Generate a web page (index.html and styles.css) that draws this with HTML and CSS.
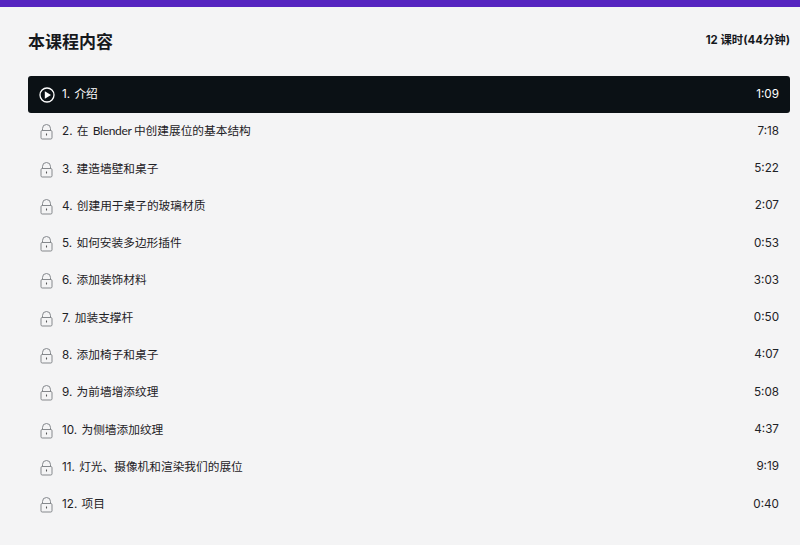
FILE: index.html
```html
<!DOCTYPE html>
<html lang="zh">
<head>
<meta charset="utf-8">
<title>本课程内容</title>
<link rel="stylesheet" href="styles.css">
</head>
<body>
<svg class="defs" width="0" height="0" aria-hidden="true">
  <symbol id="lock" viewBox="0 0 13 16">
    <path d="M2.5 7V4.5a4 4 0 0 1 8 0V7" fill="none" stroke="currentColor" stroke-width="1"/>
    <rect x="1" y="6.5" width="11" height="8.5" rx="1.2" fill="none" stroke="currentColor" stroke-width="1"/>
    <path d="M6.5 9.5v2" stroke="#555" stroke-width="1.1"/>
  </symbol>
</svg>
<div class="topbar"></div>
<main class="content">
  <header class="head">
    <h1 class="title">本课程内容</h1>
    <div class="summary">12 课时(44分钟)</div>
  </header>
  <ol class="list">
    <li class="row active">
      <svg class="play" viewBox="0 0 16 16" aria-hidden="true"><circle cx="8" cy="8" r="7" fill="none" stroke="currentColor" stroke-width="1.3"/><path d="M5.8 4.2v7.6L12 8z" fill="currentColor"/></svg>
      <span class="name">1. 介绍</span><span class="time">1:09</span>
    </li>
    <li class="row"><svg class="lock"><use href="#lock"/></svg><span class="name">2. 在 <span class="latin">Blender</span> 中创建展位的基本结构</span><span class="time">7:18</span></li>
    <li class="row"><svg class="lock"><use href="#lock"/></svg><span class="name">3. 建造墙壁和桌子</span><span class="time">5:22</span></li>
    <li class="row"><svg class="lock"><use href="#lock"/></svg><span class="name">4. 创建用于桌子的玻璃材质</span><span class="time">2:07</span></li>
    <li class="row"><svg class="lock"><use href="#lock"/></svg><span class="name">5. 如何安装多边形插件</span><span class="time">0:53</span></li>
    <li class="row"><svg class="lock"><use href="#lock"/></svg><span class="name">6. 添加装饰材料</span><span class="time">3:03</span></li>
    <li class="row"><svg class="lock"><use href="#lock"/></svg><span class="name">7. 加装支撑杆</span><span class="time">0:50</span></li>
    <li class="row"><svg class="lock"><use href="#lock"/></svg><span class="name">8. 添加椅子和桌子</span><span class="time">4:07</span></li>
    <li class="row"><svg class="lock"><use href="#lock"/></svg><span class="name">9. 为前墙增添纹理</span><span class="time">5:08</span></li>
    <li class="row"><svg class="lock"><use href="#lock"/></svg><span class="name">10. 为侧墙添加纹理</span><span class="time">4:37</span></li>
    <li class="row"><svg class="lock"><use href="#lock"/></svg><span class="name">11. 灯光、摄像机和渲染我们的展位</span><span class="time">9:19</span></li>
    <li class="row"><svg class="lock"><use href="#lock"/></svg><span class="name">12. 项目</span><span class="time">0:40</span></li>
  </ol>
</main>
</body>
</html>
```
FILE: styles.css
```css
* { box-sizing: border-box; }
html, body { margin: 0; height: 100%; }
body {
  background: #f4f4f5;
  color: #14181c;
  font-family: Inter, "Noto Sans CJK SC", sans-serif;
  overflow: hidden;
}
.defs { position: absolute; }
.topbar { height: 7px; background: #5624c0; }
.content { padding: 0 10px 0 28px; }
.head {
  display: flex;
  justify-content: space-between;
  align-items: flex-start;
  height: 69px;
  padding-top: 23px;
}
.title { margin: 0; font-size: 17px; line-height: 24px; font-weight: 700; color: #16191d; }
.summary { font-size: 11.4px; line-height: 18px; font-weight: 700; padding-top: 1px; color: #16191d; }
.list { list-style: none; margin: 0; padding: 0; }
.row {
  display: flex;
  align-items: center;
  height: 37.27px;
  padding: 0 11px;
  font-size: 11.7px;
  color: #1e2226;
  border-radius: 3px;
}
.row.active { background: #0b1115; color: #fff; }
.play { width: 16px; height: 16px; margin-right: 7px; flex: none; }
.lock { width: 13px; height: 16px; margin: 1px 9px 0 1px; flex: none; color: #85888c; }
.name { flex: 1; word-spacing: 1px; position: relative; top: -2px; }
.latin { font-family: Lato, sans-serif; font-size: 12px; letter-spacing: -0.3px; margin-right: -2px; }
.time { position: relative; top: -1px; }
```
